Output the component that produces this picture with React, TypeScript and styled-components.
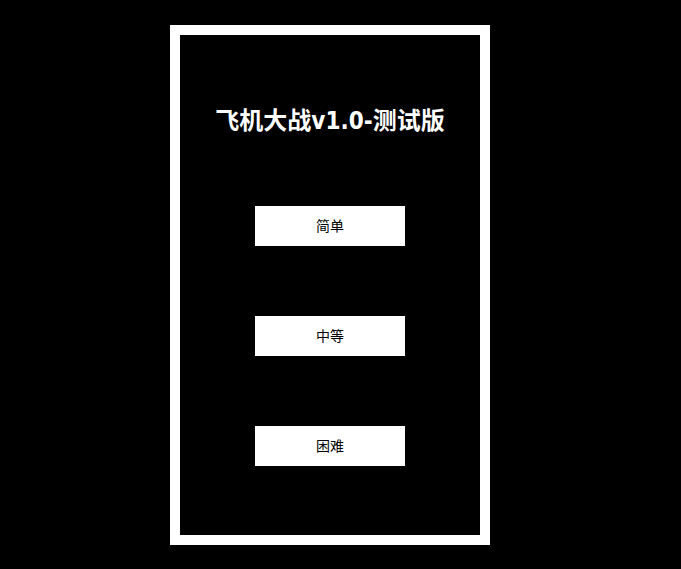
import React from "react";
import styled, { createGlobalStyle } from "styled-components";

const Global = createGlobalStyle`
  html, body { margin: 0; padding: 0; background: #000; }
  body { font-family: "Noto Sans CJK SC", "Noto Sans", sans-serif; }
`;

const Page = styled.div`
  padding: 25px 0 0 170px;
  min-height: 569px;
  box-sizing: border-box;
`;

const Frame = styled.div`
  width: 320px;
  height: 520px;
  box-sizing: border-box;
  border: 10px solid #fff;
  background: #000;
  display: flex;
  flex-direction: column;
  align-items: center;
`;

const Title = styled.h1`
  margin: 70px 0 0;
  height: 32px;
  line-height: 32px;
  font-size: 24px;
  font-weight: 700;
  color: #fff;
  font-family: "DejaVu Sans Condensed", "Noto Sans CJK SC", sans-serif;
  text-align: center;
  white-space: nowrap;
`;

const Buttons = styled.div`
  margin-top: 69px;
  display: flex;
  flex-direction: column;
  gap: 70px;
`;

const Button = styled.button`
  width: 150px;
  height: 40px;
  border: none;
  background: #fff;
  color: #000;
  font-family: "Noto Sans CJK SC", sans-serif;
  font-size: 14px;
  line-height: 20px;
  padding: 0 0 2px;
  cursor: pointer;
`;

export default function App() {
  return (
    <>
      <Global />
      <Page>
        <Frame>
          <Title>飞机大战v1.0-测试版</Title>
          <Buttons>
            <Button>简单</Button>
            <Button>中等</Button>
            <Button>困难</Button>
          </Buttons>
        </Frame>
      </Page>
    </>
  );
}
